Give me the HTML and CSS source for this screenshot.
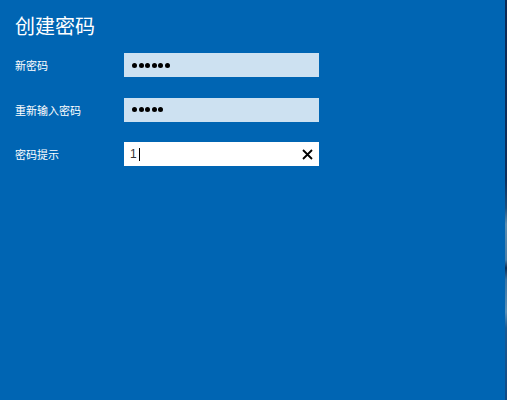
FILE: index.html
```html
<!DOCTYPE html>
<html lang="zh-CN">
<head>
<meta charset="utf-8">
<title>创建密码</title>
<link rel="stylesheet" href="styles.css">
</head>
<body>
<div class="screen">
  <main class="panel">
    <h1 class="title">创建密码</h1>
    <div class="form">
      <label class="label">新密码</label>
      <div class="field filled">
        <span class="dots"><i></i><i></i><i></i><i></i><i></i><i></i></span>
      </div>
      <label class="label">重新输入密码</label>
      <div class="field filled">
        <span class="dots"><i></i><i></i><i></i><i></i><i></i></span>
      </div>
      <label class="label">密码提示</label>
      <div class="field active">
        <span class="value">1</span><span class="caret"></span>
        <svg class="clear" width="11" height="11" viewBox="0 0 11 11" aria-hidden="true">
          <path d="M1 1 L10 10 M10 1 L1 10" stroke="#000" stroke-width="1.8" fill="none"/>
        </svg>
      </div>
    </div>
  </main>
  <div class="edge"></div>
</div>
</body>
</html>
```
FILE: styles.css
```css
html, body {
  margin: 0;
  padding: 0;
  background: #0065b3;
}
body {
  font-family: "Noto Sans CJK SC", "Noto Sans", "Liberation Sans", sans-serif;
  color: #fff;
}
.screen {
  display: flex;
  width: 507px;
  height: 400px;
  overflow: hidden;
}
.panel {
  flex: 1;
  padding: 14px 0 0 15px;
}
.edge {
  width: 2px;
  background: linear-gradient(to bottom, #0c2a55 0%, #0d2f5c 45%, #1b4f7e 52%, #5b8cae 56%, #4b7ea6 65%, #0e2d52 67%, #3a74a3 70%, #5a8fb5 78%, #1a5a93 82%, #0f4a85 100%);
}
.title {
  margin: 0 0 15px 0;
  font-size: 20px;
  line-height: 24px;
  font-weight: 400;
  letter-spacing: 0;
}
.form {
  display: grid;
  grid-template-columns: 109px 195px;
  grid-auto-rows: 24px;
  row-gap: 20.5px;
  align-items: center;
}
.label {
  font-size: 11px;
  line-height: 14px;
}
.field {
  height: 24px;
  display: flex;
  align-items: center;
  box-sizing: border-box;
}
.filled {
  background: #cde1f1;
  padding-left: 8px;
}
.dots {
  display: flex;
  gap: 1.6px;
}
.dots i {
  width: 5px;
  height: 5px;
  border-radius: 50%;
  background: #000;
}
.active {
  background: #fff;
  padding: 0 6px 0 6px;
  color: #000;
}
.value {
  font-family: "Liberation Sans", sans-serif;
  font-size: 12px;
  line-height: 14px;
  color: #333;
}
.caret {
  width: 1px;
  height: 13px;
  background: #000;
  margin-left: 2px;
}
.clear {
  margin-left: auto;
}
```
